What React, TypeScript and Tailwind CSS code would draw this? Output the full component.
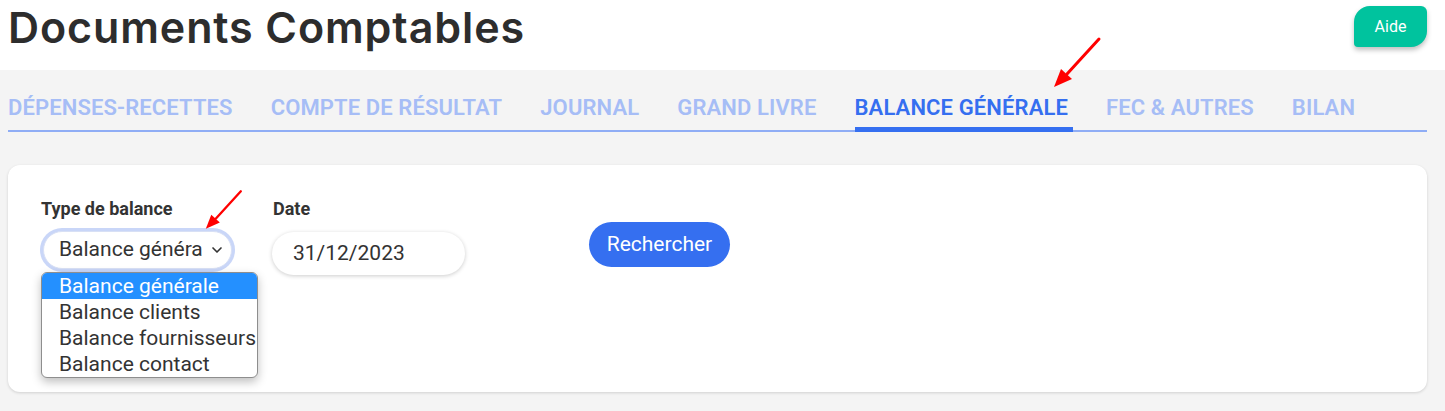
import {ChevronDown} from 'lucide-react';

const tabs = [
  {name: 'DÉPENSES-RECETTES', active: false},
  {name: 'COMPTE DE RÉSULTAT', active: false},
  {name: 'JOURNAL', active: false},
  {name: 'GRAND LIVRE', active: false},
  {name: 'BALANCE GÉNÉRALE', active: true},
  {name: 'FEC & AUTRES', active: false},
  {name: 'BILAN', active: false},
];

const options = [
  'Balance générale',
  'Balance clients',
  'Balance fournisseurs',
  'Balance contact',
];

function RedArrow({className}: {className: string}) {
  return (
    <svg
      className={className}
      viewBox="0 0 50 54"
      fill="none"
      aria-hidden="true"
    >
      <line
        x1="46"
        y1="3"
        x2="14"
        y2="38"
        stroke="#ff0000"
        strokeWidth="3"
        strokeLinecap="round"
      />
      <polygon points="1,51 8,33 19,43" fill="#ff0000" />
    </svg>
  );
}

export default function App() {
  return (
    <div className="relative min-h-screen bg-[#f4f4f4] font-['Roboto',sans-serif]">
      <header className="flex h-[70px] items-start justify-between bg-white pr-[18px] pl-2">
        <h1 className="pt-[6px] font-['Inter',sans-serif] text-[43px] leading-none font-semibold tracking-[0.9px] text-[#2d2d2d]">
          Documents Comptables
        </h1>
        <button className="mt-[6px] h-[41px] w-[73px] rounded-tl-[16px] rounded-tr-[6px] rounded-br-[16px] rounded-bl-[4px] bg-[#00c39e] text-[16px] font-normal text-white shadow-[0_3px_5px_rgba(0,0,0,0.25)]">
          Aide
        </button>
      </header>

      <nav className="mt-[27px] mr-[18px] ml-2 flex gap-[38px] border-b-2 border-[#8fadf5]">
        {tabs.map((tab) => (
          <div
            key={tab.name}
            className={
              tab.active
                ? '-mr-[5px] -mb-[2px] border-b-[5px] border-[#356ff0] pr-[5px] pb-[8px] text-[22px] leading-[22px] font-semibold tracking-[0.12px] text-[#356ff0]'
                : 'pb-[11px] text-[22px] leading-[22px] font-semibold tracking-[0.12px] text-[#a6bdf6]'
            }
          >
            {tab.name}
          </div>
        ))}
      </nav>

      <section className="mt-[33px] mr-[18px] ml-2 h-[227px] rounded-xl bg-white px-[32px] pt-[34px] shadow-[0_1px_3px_rgba(0,0,0,0.15)]">
        <div className="flex items-start">
          <div className="relative w-[195px]">
            <div className="pl-[1px] text-[18px] leading-[20px] font-bold text-[#333]">
              Type de balance
            </div>
            <div className="mt-[9px] rounded-full bg-[#c9d6f8] p-[3px]">
              <div className="flex h-[38px] items-center justify-between rounded-full border border-[#d8e0f5] bg-white pr-[6px] pl-[15px] text-[21px] text-[#333]">
                <span className="whitespace-nowrap">Balance généra</span>
                <ChevronDown className="h-[16px] w-[16px]" strokeWidth={2.5} />
              </div>
            </div>
            <ul className="absolute top-[73px] left-[1px] w-[217px] overflow-hidden rounded-[6px] border border-[#8e8e8e] bg-white text-[21px] leading-[26px] text-[#333] shadow-[0_4px_10px_rgba(0,0,0,0.25)]">
              {options.map((opt, i) => (
                <li
                  key={opt}
                  className={
                    i === 0
                      ? 'bg-[#2490ff] pl-[17px] whitespace-nowrap text-white'
                      : 'pl-[17px] whitespace-nowrap'
                  }
                >
                  {opt}
                </li>
              ))}
            </ul>
          </div>

          <div className="ml-[37px] w-[193px]">
            <div className="pl-[1px] text-[18px] leading-[20px] font-bold text-[#333]">
              Date
            </div>
            <div className="mt-[13px] flex h-[43px] items-center rounded-full bg-white pl-[21px] text-[21px] text-[#333] shadow-[0_1px_4px_rgba(0,0,0,0.2)]">
              31/12/2023
            </div>
          </div>

          <button className="mt-[23px] ml-[124px] h-[45px] w-[141px] rounded-full bg-[#356ff0] text-[21px] text-white">
            Rechercher
          </button>
        </div>
      </section>

      <RedArrow className="absolute top-[36px] left-[1053px] h-[54px] w-[50px]" />
      <RedArrow className="absolute top-[189px] left-[203px] h-[42px] w-[43px]" />
    </div>
  );
}
